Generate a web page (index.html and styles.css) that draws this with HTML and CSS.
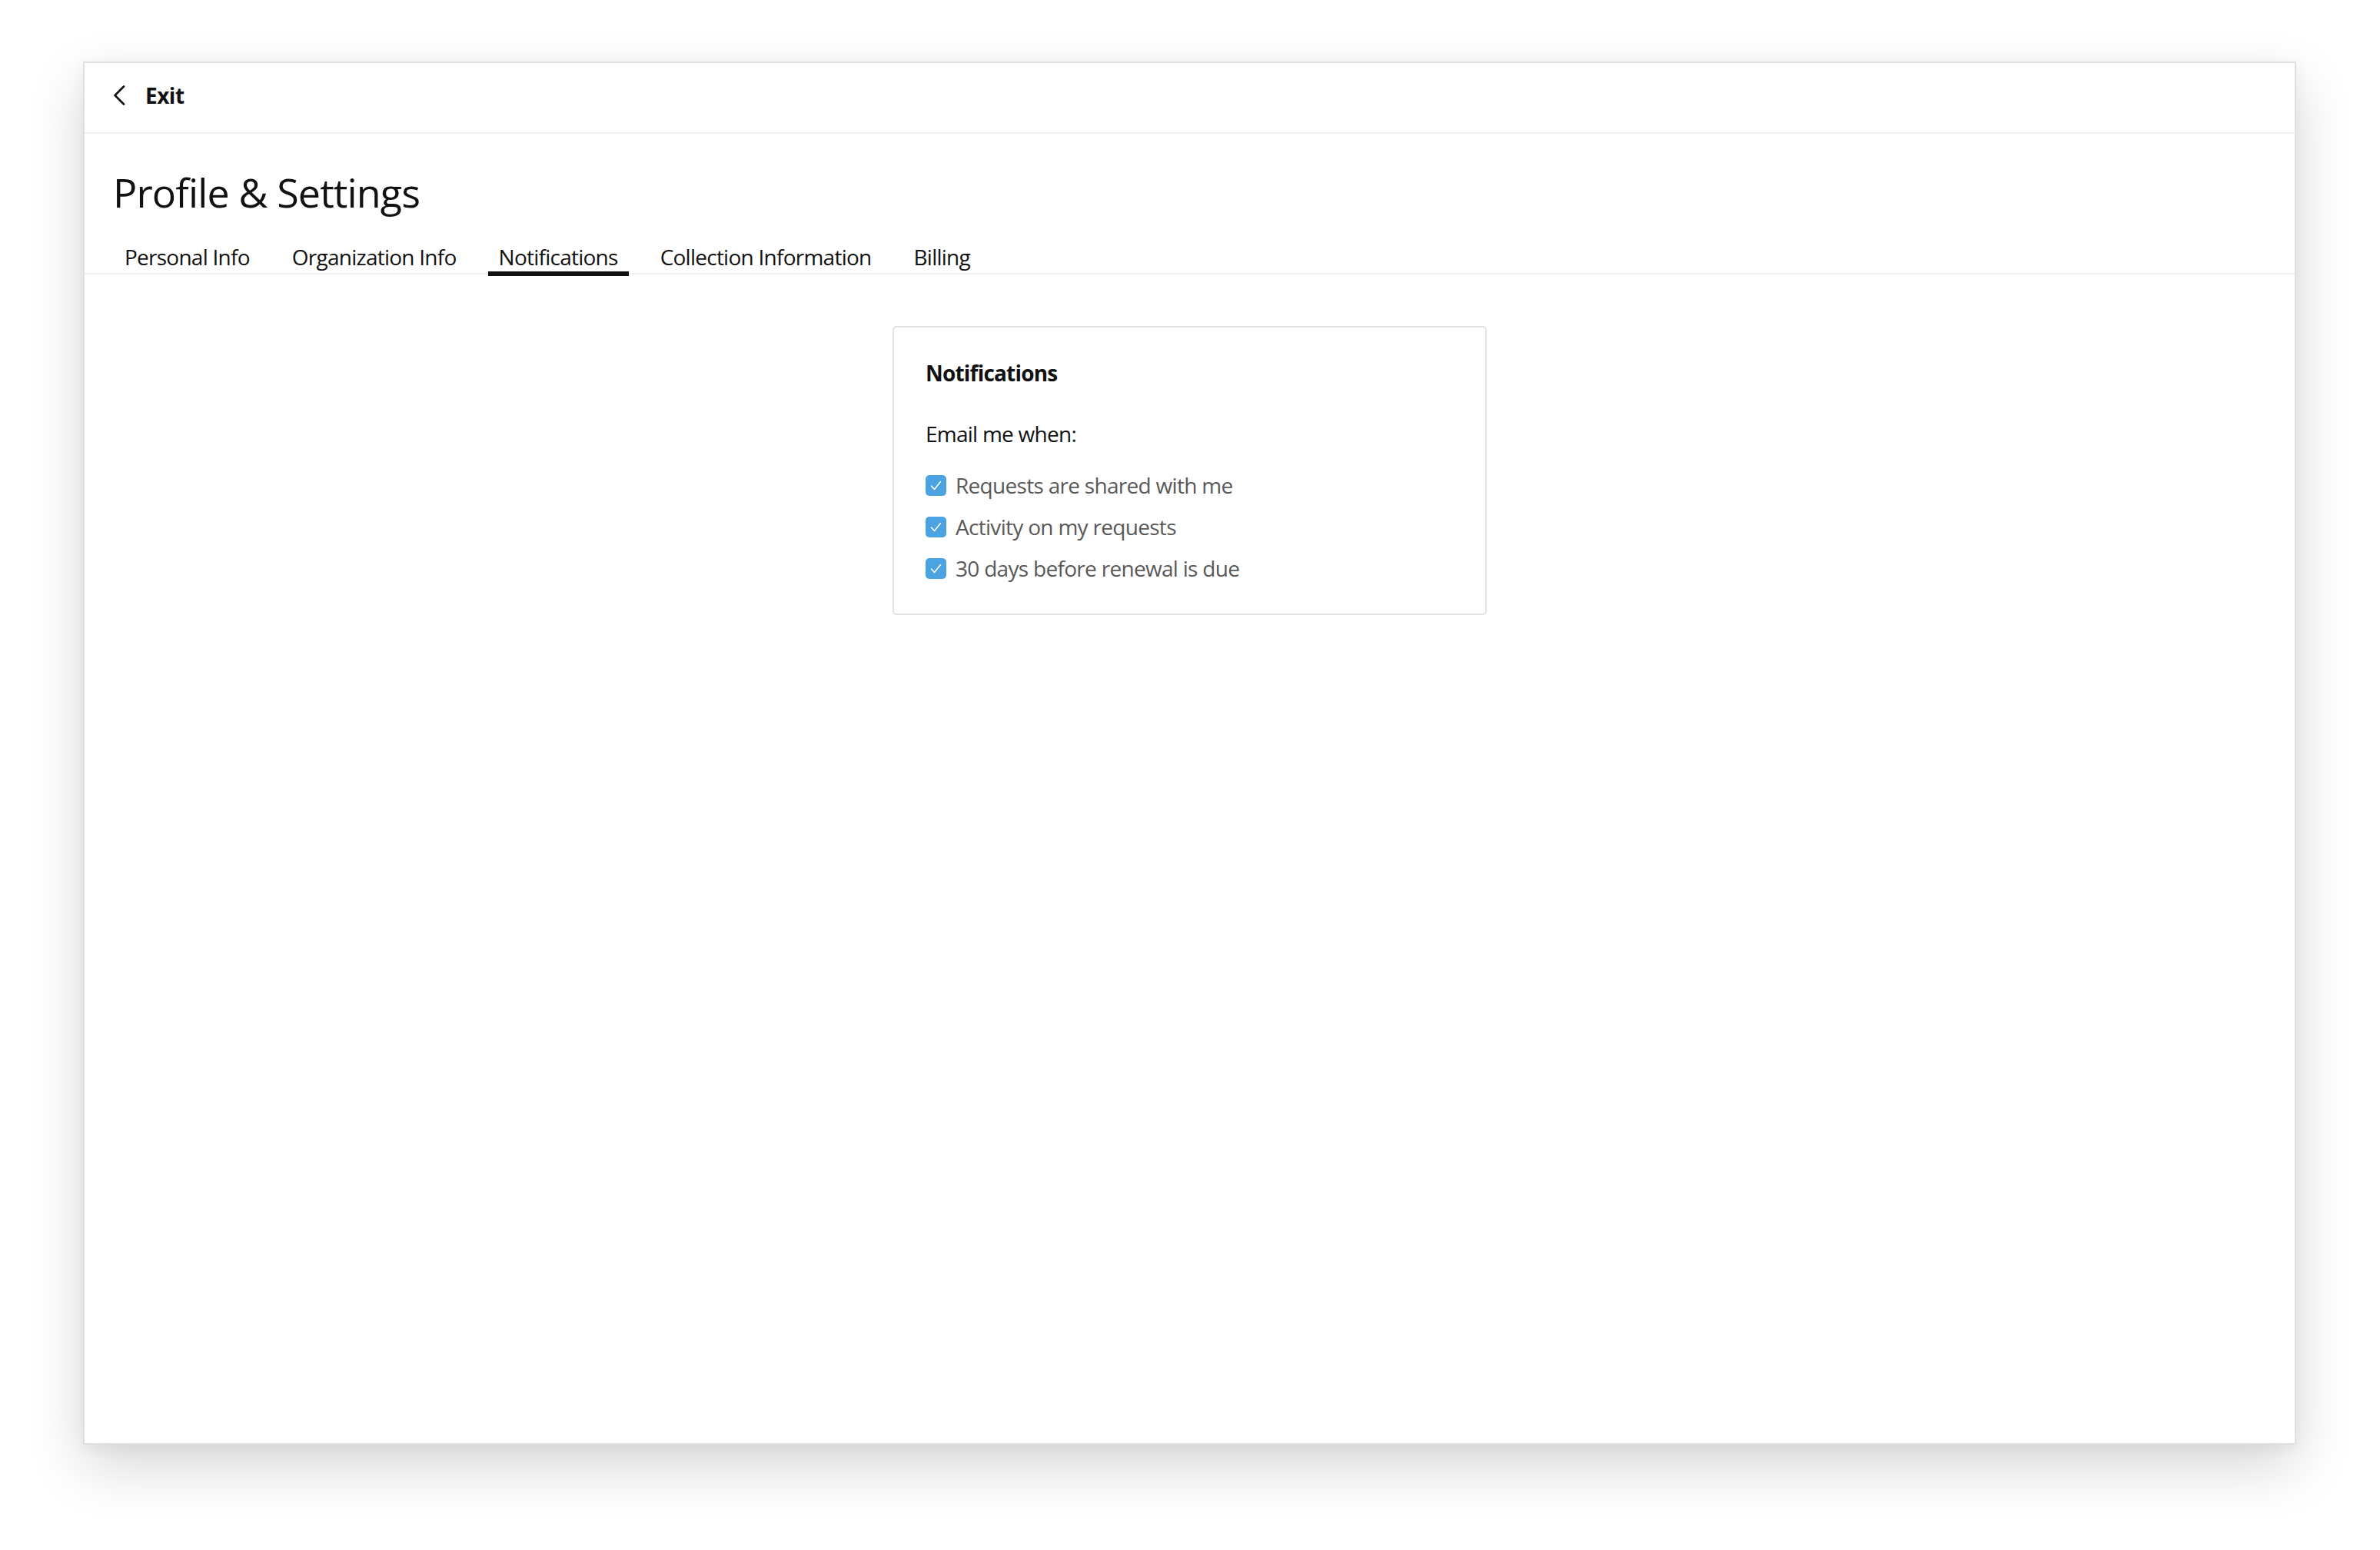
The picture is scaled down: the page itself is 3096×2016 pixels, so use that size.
FILE: index.html
```html
<!DOCTYPE html>
<html lang="en">
<head>
<meta charset="utf-8">
<title>Profile &amp; Settings</title>
<link rel="stylesheet" href="styles.css">
</head>
<body>
<div class="window">
  <header class="topbar">
    <a class="exit" href="#">
      <svg class="chev" width="16" height="26" viewBox="0 0 16 26" aria-hidden="true">
        <polyline points="14,1.5 2.5,13 14,24.5" fill="none" stroke="#111" stroke-width="2.6" stroke-linecap="round" stroke-linejoin="round"/>
      </svg>
      <span>Exit</span>
    </a>
  </header>
  <h1 class="title">Profile &amp; Settings</h1>
  <nav class="tabs">
    <a class="tab" href="#">Personal Info</a>
    <a class="tab" href="#">Organization Info</a>
    <a class="tab active" href="#">Notifications</a>
    <a class="tab" href="#">Collection Information</a>
    <a class="tab" href="#">Billing</a>
  </nav>
  <section class="card">
    <h2 class="card-title">Notifications</h2>
    <p class="card-lead">Email me when:</p>
    <ul class="opts">
      <li class="opt"><span class="box"><svg width="27" height="27" viewBox="0 0 27 27"><polyline points="7.5,14 11.5,18.5 19.5,8.5" fill="none" stroke="#fff" stroke-width="1.6" stroke-linecap="round" stroke-linejoin="round"/></svg></span>Requests are shared with me</li>
      <li class="opt"><span class="box"><svg width="27" height="27" viewBox="0 0 27 27"><polyline points="7.5,14 11.5,18.5 19.5,8.5" fill="none" stroke="#fff" stroke-width="1.6" stroke-linecap="round" stroke-linejoin="round"/></svg></span>Activity on my requests</li>
      <li class="opt"><span class="box"><svg width="27" height="27" viewBox="0 0 27 27"><polyline points="7.5,14 11.5,18.5 19.5,8.5" fill="none" stroke="#fff" stroke-width="1.6" stroke-linecap="round" stroke-linejoin="round"/></svg></span>30 days before renewal is due</li>
    </ul>
  </section>
</div>
</body>
</html>
```

FILE: styles.css
```css
* { box-sizing: border-box; }
html, body { margin: 0; padding: 0; background: #ffffff; }
body {
  font-family: "Open Sans", "Noto Sans", "Liberation Sans", sans-serif;
  color: #111;
  width: 3096px;
  height: 2016px;
  overflow: hidden;
}
.window {
  margin: 80px 0 0 108px;
  width: 2879px;
  height: 1799px;
  background: #fff;
  border: 2px solid #e0e0e0;
  box-shadow: 0 28px 70px rgba(0, 0, 0, 0.16), 0 4px 18px rgba(0, 0, 0, 0.05);
}
.topbar {
  height: 92px;
  border-bottom: 2px solid #f0f0f0;
  padding: 23px 38px 0;
}
.exit {
  display: flex;
  align-items: center;
  gap: 26px;
  color: #111;
  text-decoration: none;
  font-size: 28px;
  font-weight: 700;
  line-height: 38px;
  letter-spacing: -0.5px;
}
.chev { display: block; margin-left: -1px; }
.title {
  margin: 40px 0 0;
  padding: 0 38px 0 37px;
  font-size: 52px;
  font-weight: 400;
  line-height: 72px;
  letter-spacing: -0.85px;
  color: #111;
}
.tabs {
  margin-top: 29px;
  display: flex;
  gap: 27px;
  padding: 0 38px 2px;
  border-bottom: 2px solid #efefef;
}
.tab {
  position: relative;
  display: block;
  padding: 0 14px;
  font-size: 28px;
  line-height: 38px;
  letter-spacing: -0.75px;
  color: #111;
  text-decoration: none;
}
.tab.active::after {
  content: "";
  position: absolute;
  left: 0;
  right: 0;
  top: 38px;
  height: 6px;
  background: #111;
}
.card {
  width: 773px;
  margin: 67px auto 0;
  border: 2px solid #e2e2e2;
  border-radius: 5px;
  padding: 40px 40px 40px 41px;
}
.card-title {
  margin: 0;
  font-size: 28px;
  font-weight: 700;
  line-height: 38px;
  letter-spacing: -0.8px;
  color: #111;
}
.card-lead {
  margin: 41px 0 0;
  font-size: 28px;
  line-height: 38px;
  letter-spacing: -0.75px;
  color: #111;
}
.opts {
  list-style: none;
  margin: 29px 0 0;
  padding: 0;
  display: flex;
  flex-direction: column;
  gap: 16px;
}
.opt {
  display: flex;
  align-items: center;
  gap: 12px;
  font-size: 28px;
  line-height: 38px;
  letter-spacing: -0.7px;
  color: #595959;
}
.box {
  width: 27px;
  height: 27px;
  border-radius: 5px;
  background: #4ca3e2;
  flex: none;
  display: block;
}
.box svg { display: block; }
```
